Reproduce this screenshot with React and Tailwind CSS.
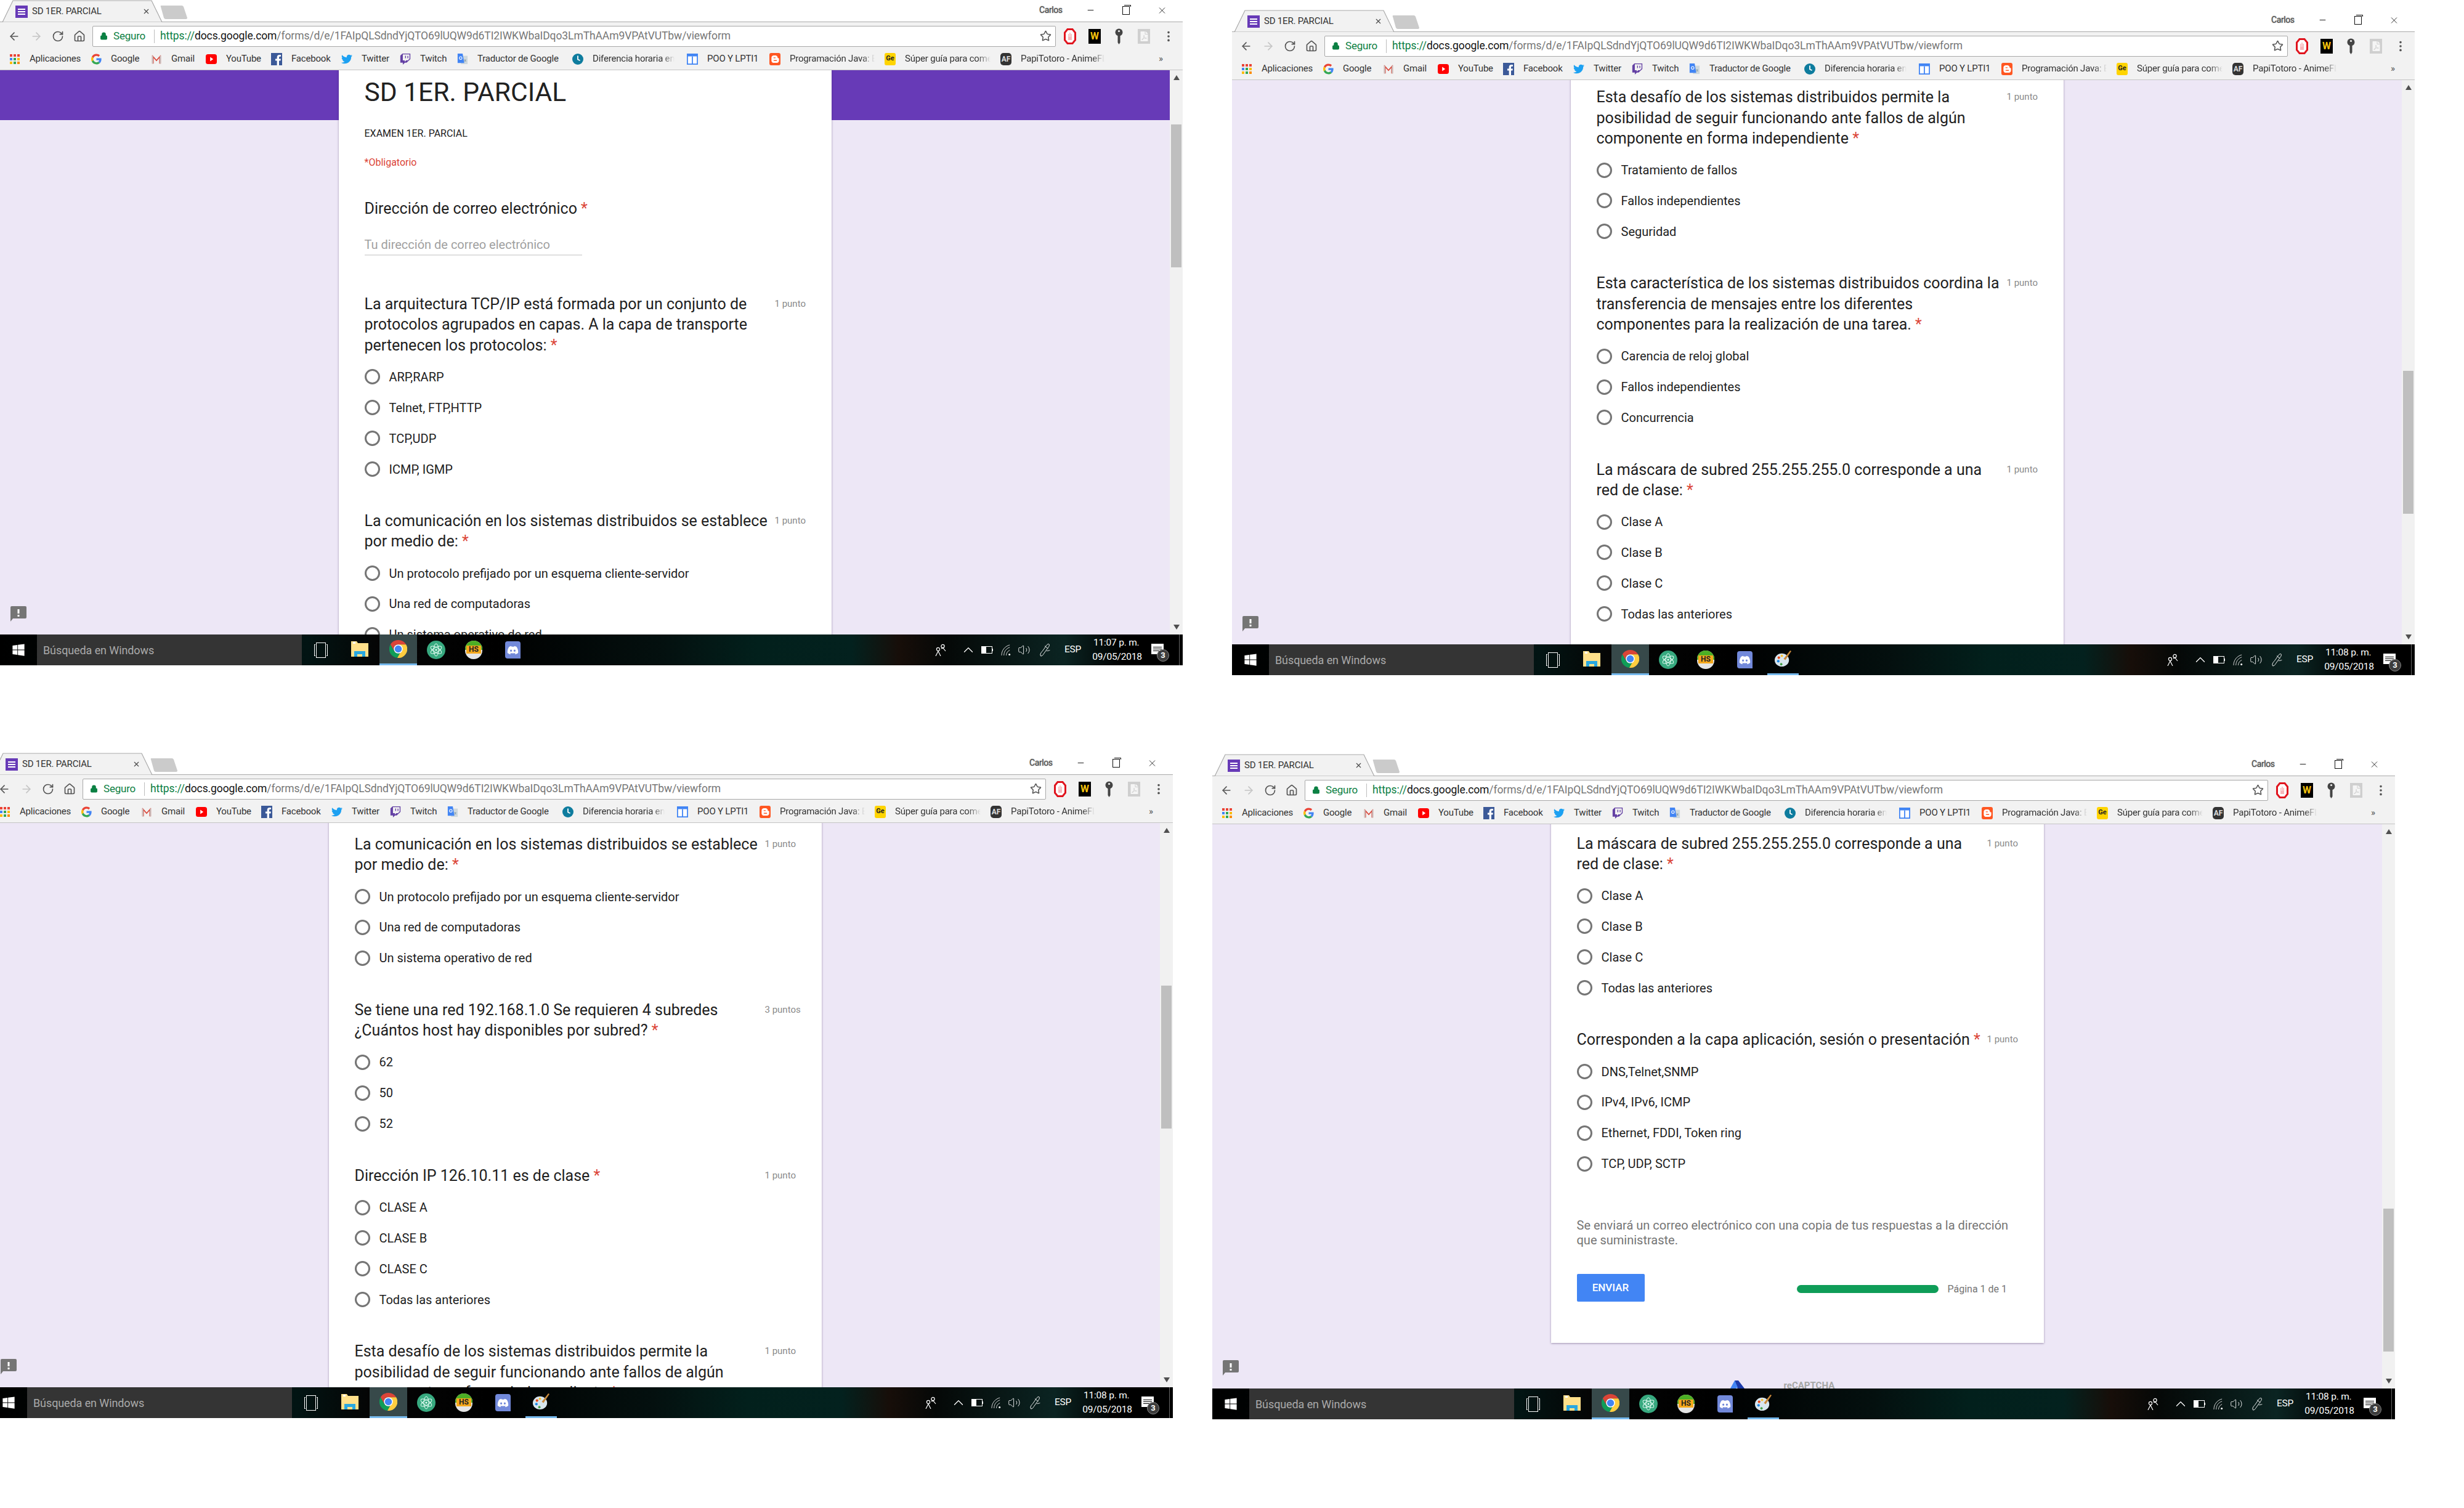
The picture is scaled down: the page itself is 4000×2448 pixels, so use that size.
import { ArrowLeft, ArrowRight, RotateCw, House, Star, EllipsisVertical, Lock, Minus, X, ChevronUp, Volume2 } from "lucide-react";
import { FaFacebookF, FaTwitter, FaTwitch, FaBloggerB, FaDiscord, FaWindows, FaFilePdf } from "react-icons/fa";

const URL_REST = "/forms/d/e/1FAIpQLSdndYjQTO69lUQW9d6TI2IWKWbaIDqo3LmThAAm9VPAtVUTbw/viewform";

// ---------- bookmark favicons ----------
const AppsIcon = () => {
    const colors = ["#ea4335", "#ea4335", "#ea4335", "#4285f4", "#34a853", "#fbbc05", "#fbbc05", "#34a853", "#fb8c00"];
    return (
        <div className="grid grid-cols-3 gap-[2px] w-[17px]">
            {colors.map((c, i) => (
                <svg key={i} viewBox="0 0 4 4" className="w-[4px] h-[4px]"><rect width="4" height="4" fill={c} /></svg>
            ))}
        </div>
    );
};

const GoogleIcon = () => (
    <svg viewBox="0 0 48 48" className="w-[17px] h-[18px]">
        <path fill="#EA4335" d="M24 9.5c3.54 0 6.71 1.22 9.21 3.6l6.85-6.85C35.9 2.38 30.47 0 24 0 14.62 0 6.51 5.38 2.56 13.22l7.98 6.19C12.43 13.72 17.74 9.5 24 9.5z" />
        <path fill="#4285F4" d="M46.98 24.55c0-1.57-.15-3.09-.38-4.55H24v9.02h12.94c-.58 2.96-2.26 5.48-4.78 7.18l7.73 6c4.51-4.18 7.09-10.36 7.09-17.65z" />
        <path fill="#FBBC05" d="M10.53 28.59c-.48-1.45-.76-2.99-.76-4.59s.27-3.14.76-4.59l-7.98-6.19C.92 16.46 0 20.12 0 24c0 3.88.92 7.54 2.56 10.78l7.97-6.19z" />
        <path fill="#34A853" d="M24 48c6.48 0 11.93-2.13 15.89-5.81l-7.73-6c-2.15 1.45-4.92 2.3-8.16 2.3-6.26 0-11.57-4.22-13.47-9.91l-7.98 6.19C6.51 42.62 14.62 48 24 48z" />
    </svg>
);

const GmailIcon = () => (
    <svg viewBox="0 0 20 20" className="w-[18px] h-[18px]">
        <path d="M2 18V3h1l7 8 7-8h1v15h-3V8l-5 6-5-6v10z" fill="#db4437" />
        <path d="M2 18V3l2 2v13zM18 18V3l-2 2v13z" fill="#c6c6c6" />
    </svg>
);

const YoutubeIcon = () => (
    <svg viewBox="0 0 20 20" className="w-[18px] h-[18px]">
        <rect x="0" y="1" width="20" height="18" rx="4" fill="#f00" />
        <path d="M8 6l5.5 4L8 14z" fill="#fff" />
    </svg>
);

const FacebookIcon = () => (
    <div className="w-[20px] h-[20px] bg-[#3b5998] flex items-end justify-end">
        <FaFacebookF className="text-white w-[13px] h-[17px]" />
    </div>
);

const TranslateIcon = () => (
    <svg viewBox="0 0 20 20" className="w-[19px] h-[20px]">
        <rect x="7" y="4" width="12" height="15" fill="#cfd8dc" />
        <path d="M1 0h9l3 17H1z" fill="#4285f4" />
        <circle cx="6.5" cy="8" r="2.4" fill="none" stroke="#fff" strokeWidth="1.2" />
        <path d="M13 11l3 3m0-3l-3 3" stroke="#78909c" strokeWidth="1.2" />
    </svg>
);

const ClockIcon = () => (
    <svg viewBox="0 0 20 20" className="w-[19px] h-[20px]">
        <circle cx="10" cy="10" r="10" fill="#0e7c9e" />
        <path d="M10 4v6.5l4 2" fill="none" stroke="#fff" strokeWidth="2" />
    </svg>
);

const DocIcon = () => (
    <svg viewBox="0 0 20 20" className="w-[20px] h-[20px]">
        <rect x="1" y="1" width="18" height="18" fill="#fff" stroke="#4285f4" strokeWidth="2" />
        <rect x="1" y="1" width="18" height="4" fill="#4285f4" />
        <path d="M10 5v14" stroke="#4285f4" strokeWidth="2" />
    </svg>
);

const BloggerIcon = () => (
    <div className="w-[20px] h-[20px] rounded-[3px] bg-[#ff5722] flex items-center justify-center">
        <FaBloggerB className="text-white w-[13px] h-[14px]" />
    </div>
);

const GeIcon = () => (
    <div className="w-[20px] h-[20px] rounded-[3px] bg-[#ffd400] flex items-center justify-center text-[11px] font-bold text-[#222]">Ge</div>
);

const AfIcon = () => (
    <div className="w-[20px] h-[20px] rounded-[5px] bg-[#333] flex items-center justify-center text-[12px] font-bold text-[#ddd]">AF</div>
);

const BOOKMARKS = [
    { label: "Aplicaciones", icon: <AppsIcon />, box: "w-[116px]", fade: false },
    { label: "Google", icon: <GoogleIcon />, box: "w-[82px]", fade: false },
    { label: "Gmail", icon: <GmailIcon />, box: "w-[73px]", fade: false },
    { label: "YouTube", icon: <YoutubeIcon />, box: "w-[90px]", fade: false },
    { label: "Facebook", icon: <FacebookIcon />, box: "w-[98px]", fade: false },
    { label: "Twitter", icon: <FaTwitter className="text-[#1da1f2] w-[20px] h-[20px]" />, box: "w-[79px]", fade: false },
    { label: "Twitch", icon: <FaTwitch className="text-[#6441a4] w-[20px] h-[20px]" />, box: "w-[77px]", fade: false },
    { label: "Traductor de Google", icon: <TranslateIcon />, box: "w-[171px]", fade: false },
    { label: "Diferencia horaria en", icon: <ClockIcon />, box: "w-[170px]", fade: true },
    { label: "POO Y LPTI1", icon: <DocIcon />, box: "w-[118px]", fade: false },
    { label: "Programación Java: Ejemplos", icon: <BloggerIcon />, box: "w-[171px]", fade: true },
    { label: "Súper guía para comenzar", icon: <GeIcon />, box: "w-[172px]", fade: true },
    { label: "PapiTotoro - AnimeFLV", icon: <AfIcon />, box: "w-[169px]", fade: true },
];

// ---------- extension icons ----------
const StopIcon = () => (
    <svg viewBox="0 0 20 26" className="w-[20px] h-[26px]">
        <path d="M6 1.5h8l4.5 5.5v12L14 24.500H6L1.500 19V7z" fill="#fff" stroke="#e0141e" strokeWidth="3" />
        <path d="M7 19V9h1.400v5h.8V7h1.600v7h.6V9h1.600v10z" fill="#e0141e" opacity="0.3" />
    </svg>
);

const KeyIcon = () => (
    <svg viewBox="0 0 13 26" className="w-[13px] h-[26px]">
        <circle cx="6.5" cy="6.5" r="6" fill="#444" />
        <circle cx="6.5" cy="4.5" r="1.6" fill="#f2f2f2" />
        <path d="M4.5 11h4v12l-2 3-2-3z" fill="#444" />
    </svg>
);

// ---------- taskbar icons ----------
const ChromeIcon = () => (
    <svg viewBox="0 0 48 48" className="w-[29px] h-[29px]">
        <path fill="#db4437" d="M24 0C15 0 7 5 3 12l10 18a12 12 0 0 1 11-18h21C41 5 33 0 24 0z" />
        <path fill="#0f9d58" d="M3 12A24 24 0 0 0 21.5 47.9L31 31a12 12 0 0 1-18-1z" />
        <path fill="#ffcd40" d="M45 12H24a12 12 0 0 1 7 19L21.5 47.9A24 24 0 0 0 45 12z" />
        <circle cx="24" cy="24" r="12" fill="#fff" />
        <circle cx="24" cy="24" r="9.5" fill="#4285f4" />
    </svg>
);

const FolderIcon = () => (
    <svg viewBox="0 0 28 30" className="w-[28px] h-[30px]">
        <path d="M0 1h9l2 3h17v22H0z" fill="#ffe08a" />
        <rect x="3" y="2" width="4" height="3" fill="#fff" />
        <path d="M5 26V17h18v9h-5v-4h-8v4z" fill="#29a8e0" />
    </svg>
);

const AtomIcon = () => (
    <svg viewBox="0 0 30 30" className="w-[30px] h-[30px]">
        <circle cx="15" cy="15" r="15" fill="#37a97f" />
        <g fill="none" stroke="#e8fff6" strokeWidth="1">
            <ellipse cx="15" cy="15" rx="4" ry="10" />
            <ellipse cx="15" cy="15" rx="4" ry="10" transform="rotate(60 15 15)" />
            <ellipse cx="15" cy="15" rx="4" ry="10" transform="rotate(120 15 15)" />
        </g>
        <circle cx="15" cy="15" r="1.6" fill="#e8fff6" />
    </svg>
);

const HsIcon = () => (
    <div className="relative w-[28px] h-[30px] rounded-full overflow-hidden bg-[#e5e5e5] flex flex-col">
        <div className="h-[15px] bg-[#4caf25]"></div>
        <div className="absolute inset-x-[2px] top-[8px] h-[13px] bg-[#f5a81c] text-[12px] leading-[13px] font-bold text-[#222] text-center">HS</div>
    </div>
);

const DiscordIcon = () => (
    <div className="w-[25px] h-[28px] rounded-[4px] rounded-br-none bg-[#7289da] flex items-center justify-center">
        <FaDiscord className="text-white w-[19px] h-[19px]" />
    </div>
);

const PaletteIcon = () => (
    <svg viewBox="0 0 30 30" className="w-[29px] h-[29px]">
        <ellipse cx="13" cy="17" rx="12" ry="11" fill="#d8e6ee" />
        <circle cx="8" cy="13" r="2.2" fill="#e64a19" />
        <circle cx="13" cy="10" r="2" fill="#fbc02d" />
        <circle cx="7" cy="19" r="2.2" fill="#1e88e5" />
        <circle cx="12" cy="24" r="2" fill="#43a047" />
        <path d="M27 1l2 1-10 15-3-2z" fill="#c98a3c" />
    </svg>
);

const TaskViewIcon = () => (
    <div className="flex items-center gap-[1px]">
        <div className="w-[2px] h-[19px] border-l border-y border-white"></div>
        <div className="w-[16px] h-[25px] border border-white"></div>
        <div className="w-[2px] h-[19px] border-r border-y border-white"></div>
    </div>
);

const PeopleIcon = () => (
    <svg viewBox="0 0 18 20" className="w-[18px] h-[20px]" fill="none" stroke="#fff" strokeWidth="1.2">
        <circle cx="12.5" cy="4" r="2.6" />
        <circle cx="5" cy="9" r="2.6" />
        <path d="M1 20l4-8 4 8M10 8l3-1 4 5" />
    </svg>
);

const BatteryIcon = () => (
    <div className="flex items-center">
        <div className="w-[18px] h-[12px] border border-white flex">
            <div className="w-[7px] bg-white"></div>
        </div>
        <div className="w-[1px] h-[4px] bg-white"></div>
    </div>
);

const WifiIcon = () => (
    <svg viewBox="0 0 18 20" className="w-[17px] h-[19px]" fill="none" stroke="#ddd" strokeWidth="1">
        <path d="M1 19C1 10 7 3 15 1M5 19C5 12 9 7 15 5M9 19c0-4 2-7 6-9" />
        <circle cx="14.5" cy="17.5" r="1.6" fill="#fff" stroke="none" />
    </svg>
);

const PenIcon = () => (
    <svg viewBox="0 0 20 24" className="w-[20px] h-[22px]" fill="none" stroke="#fff" strokeWidth="1">
        <path d="M2 23c-2-3 0-6 3-9l7-10c2-3 5-3 5-1s-1 4-3 6l-7 10c-1 2-3 4-5 4zM9 5l6 5M12 14c3-1 5 0 6-2" />
    </svg>
);

const FeedbackIcon = () => (
    <svg viewBox="0 0 26 25" className="w-[26px] h-[25px]">
        <path d="M2 0h22a2 2 0 0 1 2 2v16a2 2 0 0 1-2 2H4l-4 5V2a2 2 0 0 1 2-2z" fill="#757575" />
        <rect x="11.5" y="5" width="3" height="7" fill="#fff" />
        <rect x="11.5" y="14" width="3" height="3" fill="#fff" />
    </svg>
);

// ---------- form ----------
const Star2 = () => <span className="text-[#db4437]"> *</span>;

const Radio = ({ label }) => (
    <div className="h-[49.9px] flex items-center gap-[15px]">
        <div className="w-[25px] h-[25px] rounded-full border-[3px] border-[#757575] shrink-0"></div>
        <span className="text-[20px] text-[#212121] whitespace-nowrap">{label}</span>
    </div>
);

const Question = ({ lines, points = "1 punto", options }) => (
    <div className="mb-[42.6px]">
        <div className="flex justify-between">
            <div className="text-[25px] leading-[33.3px] text-[#212121] whitespace-nowrap">
                {lines.map((l, i) => (
                    <div key={i}>
                        {l}
                        {i === lines.length - 1 && <Star2 />}
                    </div>
                ))}
            </div>
            <div className="w-[51px] mr-[41px] text-[15px] leading-[33px] text-[#8a8a8a] whitespace-nowrap">{points}</div>
        </div>
        <div className="mt-[10px]">
            {options.map((o) => (
                <Radio key={o} label={o} />
            ))}
        </div>
    </div>
);

const QUESTIONS = [
    {
        lines: ["La arquitectura TCP/IP está formada por un conjunto de", "protocolos agrupados en capas. A la capa de transporte", "pertenecen los protocolos:"],
        options: ["ARP,RARP", "Telnet, FTP,HTTP", "TCP,UDP", "ICMP, IGMP"],
    },
    {
        lines: ["La comunicación en los sistemas distribuidos se establece", "por medio de:"],
        options: ["Un protocolo prefijado por un esquema cliente-servidor", "Una red de computadoras", "Un sistema operativo de red"],
    },
    {
        lines: ["Se tiene una red 192.168.1.0 Se requieren 4 subredes", "¿Cuántos host hay disponibles por subred?"],
        points: "3 puntos",
        options: ["62", "50", "52"],
    },
    {
        lines: ["Dirección IP 126.10.11 es de clase"],
        options: ["CLASE A", "CLASE B", "CLASE C", "Todas las anteriores"],
    },
    {
        lines: ["Esta desafío de los sistemas distribuidos permite la", "posibilidad de seguir funcionando ante fallos de algún", "componente en forma independiente"],
        options: ["Tratamiento de fallos", "Fallos independientes", "Seguridad"],
    },
    {
        lines: ["Esta característica de los sistemas distribuidos coordina la", "transferencia de mensajes entre los diferentes", "componentes para la realización de una tarea."],
        options: ["Carencia de reloj global", "Fallos independientes", "Concurrencia"],
    },
    {
        lines: ["La máscara de subred 255.255.255.0 corresponde a una", "red de clase:"],
        options: ["Clase A", "Clase B", "Clase C", "Todas las anteriores"],
    },
    {
        lines: ["Corresponden a la capa aplicación, sesión o presentación"],
        options: ["DNS,Telnet,SNMP", "IPv4, IPv6, ICMP", "Ethernet, FDDI, Token ring", "TCP, UDP, SCTP"],
    },
];

const FormPage = ({ scrollClass }) => (
    <div className={scrollClass}>
        <div className="relative">
            <div className="absolute inset-x-0 top-0 h-[81px] bg-[#673ab7]"></div>
            <div className="relative mx-auto w-[800px] bg-white pl-[42px] pt-[12px] pb-[67px] shadow-[0_1px_3px_rgba(60,40,90,0.45)]">
                <div className="text-[42.5px] leading-[48px] text-[#212121]">SD 1ER. PARCIAL</div>
                <div className="mt-[31px] text-[16px] leading-[24px] text-[#212121]">EXAMEN 1ER. PARCIAL</div>
                <div className="mt-[23px] text-[16px] leading-[24px] text-[#db4437]">*Obligatorio</div>
                <div className="mt-[46px] text-[25px] leading-[33px] text-[#212121]">
                    Dirección de correo electrónico
                    <Star2 />
                </div>
                <div className="mt-[30px] w-[353px] pb-[4px] border-b-2 border-[#e0e0e0] text-[20px] leading-[24px] text-[#a0a0a0]">Tu dirección de correo electrónico</div>
                <div className="mt-[62px]">
                    {QUESTIONS.map((q) => (
                        <Question key={q.lines[0]} {...q} />
                    ))}
                </div>
                <div className="mt-[63px] text-[20px] leading-[24px] text-[#757575] whitespace-nowrap">
                    <div>Se enviará un correo electrónico con una copia de tus respuestas a la dirección</div>
                    <div>que suministraste.</div>
                </div>
                <div className="mt-[43px] flex items-center">
                    <div className="w-[110px] h-[45px] rounded-[2px] bg-[#4285f4] flex items-center justify-center text-[17px] font-medium text-white">ENVIAR</div>
                    <div className="ml-[247px] mt-[4px] w-[230px] h-[13px] rounded-full bg-[#0f9d58]"></div>
                    <div className="ml-[15px] mt-[4px] text-[16px] text-[#757575]">Página 1 de 1</div>
                </div>
            </div>
            <div className="mx-auto w-[800px] h-[120px] pt-[61px] flex items-start">
                <svg viewBox="0 0 28 28" className="ml-[286px] w-[28px] h-[28px]">
                    <path d="M12 0h6l10 13v15H17l-5-7 5-7z" fill="#1c3aa9" />
                    <path d="M12 0L0 22v6h12l5-7-5-7 5-3z" fill="#4285f4" />
                </svg>
                <div className="ml-[64px] mt-[-3px] text-[15px] font-bold text-[#a6a6a6]">reCAPTCHA</div>
            </div>
        </div>
    </div>
);

// ---------- browser chrome ----------
const TabStrip = () => (
    <div className="relative h-[36px] bg-white border-b border-[#a9a9a9]">
        <svg viewBox="0 0 310 36" className="absolute left-0 top-0 w-[310px] h-[36px]">
            <path d="M0 36h4L21 1h225l17 35z" fill="#f2f2f2" stroke="#a9a9a9" strokeWidth="1.2" />
            <path d="M262 9h33q2 0 3 2l6 18q0 2-3 2h-32q-2 0-3-2l-5-18q-1-2 1-2z" fill="#cbcbcb" />
        </svg>
        <div className="relative h-full flex items-center pl-[25px] pt-[2px]">
            <div className="w-[20px] h-[20px] bg-[#673ab7] flex flex-col justify-center gap-[2px] px-[4px]">
                <div className="h-[2px] bg-white"></div>
                <div className="h-[2px] bg-white"></div>
                <div className="h-[2px] bg-white"></div>
            </div>
            <div className="ml-[7px] w-[179px] text-[15px] tracking-[-0.2px] text-[#333] whitespace-nowrap">SD 1ER. PARCIAL</div>
            <X className="w-[13px] h-[13px] text-[#444]" strokeWidth={2} />
            <div className="ml-auto mr-[25px] mb-[4px] flex items-center">
                <div className="w-[40px] text-[14px] tracking-[-0.4px] text-[#444] [text-shadow:0_0_2px_#999] whitespace-nowrap">Carlos</div>
                <Minus className="ml-[36px] w-[15px] h-[15px] text-[#111]" strokeWidth={1.5} />
                <div className="ml-[44px] relative w-[12px] h-[14px] border border-[#111]">
                    <div className="absolute -top-[3px] left-[2px] w-[11px] h-[3px] border-t border-r border-[#111]"></div>
                </div>
                <X className="ml-[44px] w-[17px] h-[20px] text-[#111]" strokeWidth={1.2} />
            </div>
        </div>
    </div>
);

const Toolbar = () => (
    <div className="h-[42px] pt-[3px] bg-[#f2f2f2] flex items-center">
        <ArrowLeft className="ml-[13px] w-[20px] h-[22px] text-[#555]" strokeWidth={2} />
        <ArrowRight className="ml-[16px] w-[20px] h-[22px] text-[#c4c4c4]" strokeWidth={2} />
        <RotateCw className="ml-[15px] w-[20px] h-[22px] text-[#555]" strokeWidth={2} />
        <House className="ml-[15px] w-[20px] h-[22px] text-[#555]" strokeWidth={2} />
        <div className="ml-[11px] w-[1564px] h-[34px] bg-white border border-[#a9a9a9] rounded-[2px] flex items-center">
            <Lock className="ml-[11px] w-[13px] h-[15px] text-[#0b8043] fill-[#0b8043]" />
            <span className="ml-[9px] w-[66px] text-[17px] tracking-[-0.2px] text-[#0b8043]">Seguro</span>
            <div className="w-[1px] h-[22px] bg-[#bdbdbd]"></div>
            <div className="ml-[9px] text-[17.5px] tracking-[-0.1px] whitespace-nowrap text-[#777]">
                <span className="text-[#0b8043]">https://</span>
                <span className="text-[#111]">docs.google.com</span>
                {URL_REST}
            </div>
            <Star className="ml-auto mr-[6px] w-[19px] h-[21px] text-[#555]" strokeWidth={2} />
        </div>
        <div className="ml-[13px]"><StopIcon /></div>
        <div className="ml-[20px] w-[20px] h-[24px] bg-black text-[16px] font-bold text-[#f4c20d] flex items-center justify-center">W</div>
        <div className="ml-[23px]"><KeyIcon /></div>
        <div className="ml-[24px] w-[20px] h-[24px] bg-[#cfcfcf] flex items-center justify-center">
            <FaFilePdf className="w-[13px] h-[16px] text-[#f5f5f5]" />
        </div>
        <EllipsisVertical className="ml-[19px] w-[22px] h-[24px] text-[#555]" />
    </div>
);

const BookmarkBar = () => (
    <div className="h-[36px] bg-[#f2f2f2] border-b border-[#c4c4c4] flex items-center pl-[15px] gap-[16px]">
        {BOOKMARKS.map((b) => (
            <div key={b.label} className={`${b.box} shrink-0 flex items-center gap-[15px]`}>
                <div className="w-[18px] h-[20px] shrink-0 flex items-center justify-center">{b.icon}</div>
                <span className={b.fade
                    ? "min-w-0 text-[15px] tracking-[-0.2px] text-[#333] whitespace-nowrap [mask-image:linear-gradient(90deg,#000_85%,transparent)] overflow-hidden"
                    : "text-[15px] tracking-[-0.2px] text-[#333] whitespace-nowrap"}>
                    {b.label}
                </span>
            </div>
        ))}
        <span className="ml-[72px] text-[15px] text-[#555]">»</span>
    </div>
);

const Scrollbar = ({ thumbClass }) => (
    <div className="relative w-[21px] bg-[#f1f1f1] px-[2px]">
        <svg viewBox="0 0 10 8" className="absolute left-[6px] top-[8px] w-[10px] h-[8px]"><path d="M5 0l5 8H0z" fill="#505050" /></svg>
        <div className={thumbClass}></div>
        <svg viewBox="0 0 10 8" className="absolute left-[6px] bottom-[8px] w-[10px] h-[8px]"><path d="M5 8L0 0h10z" fill="#505050" /></svg>
    </div>
);

const Taskbar = ({ time, paint }) => (
    <div className="relative h-[50px] flex items-center text-white bg-[linear-gradient(90deg,#000_0,#021413_26%,#050505_32%,#000_42%,#04100f_56%,#02201c_64%,#03211e_72%,#170e09_76%,#050807_80%,#0b2422_90%,#000_95%,#000_100%)]">
        <div className="w-[60px] flex justify-center">
            <FaWindows className="w-[22px] h-[22px]" />
        </div>
        <div className="w-[430px] h-[50px] bg-[#343434] pl-[10px] flex items-center text-[18px] tracking-[-0.1px] text-[#aaa]">Búsqueda en Windows</div>
        <div className="ml-[18px] w-[25px] flex justify-center"><TaskViewIcon /></div>
        <div className="ml-[37px] w-[28px]"><FolderIcon /></div>
        <div className="ml-[18px] w-[61px] h-[50px] bg-[#37494a] border-b-[3px] border-[#76b9ed] flex items-center justify-center"><ChromeIcon /></div>
        <div className="ml-[16px] w-[30px]"><AtomIcon /></div>
        <div className="ml-[32px] w-[28px]"><HsIcon /></div>
        <div className="ml-[37px] w-[25px]"><DiscordIcon /></div>
        {paint && (
            <div className="ml-[24px] w-[51px] h-[50px] border-b-[3px] border-[#76b9ed] flex items-center justify-center"><PaletteIcon /></div>
        )}
        <div className={paint ? "ml-[598px] flex items-center" : "ml-[673px] flex items-center"}>
            <PeopleIcon />
            <ChevronUp className="ml-[23px] w-[26px] h-[26px]" strokeWidth={1.2} />
            <div className="ml-[8px]"><BatteryIcon /></div>
            <div className="ml-[13px]"><WifiIcon /></div>
            <Volume2 className="ml-[10px] w-[21px] h-[22px]" strokeWidth={1} />
            <div className="ml-[14px]"><PenIcon /></div>
            <div className="ml-[21px] text-[15.5px] tracking-[-0.2px]">ESP</div>
            <div className="ml-[18px] w-[78px] text-center text-[15.5px] leading-[23px] tracking-[-0.2px] whitespace-nowrap">
                <div>{time}</div>
                <div>09/05/2018</div>
            </div>
        </div>
        <div className="absolute right-[31px] top-[15px] w-[20px] h-[17px] bg-white flex flex-col justify-center gap-[2px] px-[3px]">
            <div className="h-[1px] bg-black"></div>
            <div className="h-[1px] bg-black"></div>
            <div className="h-[1px] bg-black"></div>
        </div>
        <div className="absolute right-[22px] top-[24px] w-[20px] h-[20px] rounded-full bg-[#3c3c3c] border border-[#888] text-[13px] leading-[18px] font-bold text-center">3</div>
        <div className="absolute right-[5px] top-0 w-[1px] h-[50px] bg-[#666]"></div>
    </div>
);

const BrowserWindow = ({ posClass, scrollClass, thumbClass, time, paint }) => (
    <div className={posClass}>
        <TabStrip />
        <Toolbar />
        <BookmarkBar />
        <div className="h-[916px] flex">
            <div className="relative flex-1 overflow-hidden bg-[#ede7f6]">
                <FormPage scrollClass={scrollClass} />
                <div className="absolute left-[17px] top-[870px]"><FeedbackIcon /></div>
            </div>
            <Scrollbar thumbClass={thumbClass} />
        </div>
        <Taskbar time={time} paint={paint} />
    </div>
);

export default function App() {
    return (
        <div className="relative w-[4000px] h-[2448px] overflow-hidden bg-white [font-family:Roboto,sans-serif]">
            <BrowserWindow
                posClass="absolute left-0 top-0 w-[1920px] h-[1080px]"
                scrollClass="mt-0"
                thumbClass="mt-[88px] w-[17px] h-[232px] bg-[#bfbfbf]"
                time="11:07 p. m."
                paint={false}
            />
            <BrowserWindow
                posClass="absolute left-[2000px] top-[16px] w-[1920px] h-[1080px]"
                scrollClass="-mt-[1527px]"
                thumbClass="mt-[472px] w-[17px] h-[232px] bg-[#bfbfbf]"
                time="11:08 p. m."
                paint
            />
            <BrowserWindow
                posClass="absolute -left-[16px] top-[1222px] w-[1920px] h-[1080px]"
                scrollClass="-mt-[697px]"
                thumbClass="mt-[264px] w-[17px] h-[232px] bg-[#bfbfbf]"
                time="11:08 p. m."
                paint
            />
            <BrowserWindow
                posClass="absolute left-[1968px] top-[1224px] w-[1920px] h-[1080px]"
                scrollClass="-mt-[2128px]"
                thumbClass="mt-[624px] w-[17px] h-[232px] bg-[#bfbfbf]"
                time="11:08 p. m."
                paint
            />
        </div>
    );
}
